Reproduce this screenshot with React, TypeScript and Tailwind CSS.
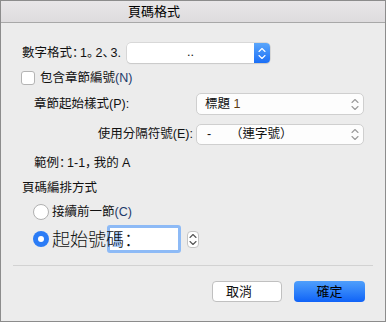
import React from "react";

const Chev = ({ color = "#8a8a8a" }: { color?: string }) => (
  <svg width="8" height="13" viewBox="0 0 8 13" fill="none">
    <path d="M1 4.5 L4 1.5 L7 4.5" stroke={color} strokeWidth="1.1" strokeLinecap="round" strokeLinejoin="round" />
    <path d="M1 8.5 L4 11.5 L7 8.5" stroke={color} strokeWidth="1.1" strokeLinecap="round" strokeLinejoin="round" />
  </svg>
);

export default function App() {
  return (
    <div className="w-[386px] h-[322px] border border-[#8c8c8c] bg-[#ececec] flex flex-col font-['Liberation_Sans','Noto_Sans_CJK_TC',sans-serif] text-[12.5px] text-[#111] leading-none overflow-hidden">
      {/* title bar */}
      <div className="h-[22px] shrink-0 border-b border-[#a8a8a8] bg-gradient-to-b from-[#e8e6e8] to-[#dedcde] flex items-center pl-[127px]">
        <span className="text-[13px] text-black">頁碼格式</span>
      </div>

      {/* row 1 */}
      <div className="mt-[20px] h-[20px] flex items-center pl-[21px]">
        <span className="w-[105px] shrink-0 whitespace-nowrap">
          數字格式<span className="font-['Noto_Sans_CJK_SC',sans-serif] tracking-[-4.5px]">：</span>1<span className="font-['Noto_Sans_CJK_SC',sans-serif] tracking-[-4px]">。</span>2<span className="font-['Noto_Sans_CJK_SC',sans-serif] tracking-[-4.5px]">、</span>3.
        </span>
        <div className="w-[143px] h-[20px] flex rounded-[4px] bg-white shadow-[0_0_0_0.5px_#c4c4c4,0_1px_1px_rgba(0,0,0,0.12)]">
          <div className="flex-1 flex items-center justify-center pb-[2px]">..</div>
          <div className="w-[16px] h-full rounded-r-[4px] bg-gradient-to-b from-[#5aa6fb] to-[#1a6ef6] flex items-center justify-center">
            <Chev color="#ffffff" />
          </div>
        </div>
      </div>

      {/* row 2 checkbox */}
      <div className="mt-[8px] h-[14px] flex items-center pl-[20px]">
        <div className="w-[14px] h-[14px] rounded-[3px] bg-white border border-[#b4b4b4]" />
        <span className="ml-[5px]">包含章節編號<span className="text-[#1d3a6a]">(N)</span></span>
      </div>

      {/* row 3 */}
      <div className="mt-[8px] h-[22px] flex items-center pl-[33px]">
        <span className="w-[162px] whitespace-nowrap">章節起始樣式(P):</span>
        <div className="w-[168px] h-[22px] rounded-[5px] bg-[#fdfdfd] border border-[#cfcfcf] flex items-center pl-[8px] pr-[4px]">
          <span className="flex-1">標題 <span className="text-[#5a3a10]">1</span></span>
          <Chev color="#9a9a9a" />
        </div>
      </div>

      {/* row 4 */}
      <div className="mt-[9px] h-[21px] flex items-center">
        <span className="w-[195px] pr-[3px] text-right whitespace-nowrap">使用分隔符號(E):</span>
        <div className="w-[168px] h-[21px] rounded-[5px] bg-[#fdfdfd] border border-[#cfcfcf] flex items-center pl-[10px] pr-[4px]">
          <span className="w-[23px]">-</span>
          <span className="flex-1">（連字號）</span>
          <Chev color="#9a9a9a" />
        </div>
      </div>

      {/* row 5 */}
      <div className="mt-[11px] h-[14px] flex items-center pl-[33px]">
        <span className="whitespace-nowrap">
          範例<span className="font-['Noto_Sans_CJK_SC',sans-serif] tracking-[-4.5px]">：</span>1-1<span className="font-['Noto_Sans_CJK_SC',sans-serif] tracking-[-4px]">，</span>我的 A
        </span>
      </div>

      {/* row 6 */}
      <div className="mt-[11px] h-[14px] flex items-center pl-[21px]">
        <span>頁碼編排方式</span>
      </div>

      {/* row 7 radio */}
      <div className="mt-[9px] h-[16px] flex items-center pl-[32px]">
        <div className="w-[16px] h-[16px] rounded-full bg-white border border-[#b0b0b0]" />
        <span className="ml-[3px]">接續前一節<span className="text-[#1d3a6a]">(C)</span></span>
      </div>

      {/* row 8 */}
      <div className="mt-[5px] h-[28px] flex items-center pl-[32px]">
        <div className="w-[16px] h-[16px] rounded-full bg-[#2b7cf6] flex items-center justify-center">
          <div className="w-[6px] h-[6px] rounded-full bg-white" />
        </div>
        <div className="relative ml-[3px] h-[28px] flex items-center">
          <div className="w-[55px] shrink-0" />
          <div className="w-[74px] h-[28px] shrink-0 rounded-[3px] border-[3px] border-[#8dbaf6] bg-white flex items-center pl-[4px]">
            <span className="w-[7px] h-[15px] bg-[#a9cbf7]" />
          </div>
          <div className="ml-[6px] w-[12px] h-[17px] rounded-[4px] bg-white border border-[#c4c4c4] flex items-center justify-center">
            <Chev color="#555555" />
          </div>
          <span className="absolute left-0 top-[4px] text-[18px] font-['Noto_Sans_CJK_TC',sans-serif] font-light text-[#111] whitespace-nowrap">
            起始號碼<span className="font-['Noto_Sans_CJK_SC',sans-serif]">：</span>
          </span>
        </div>
      </div>

      {/* separator */}
      <div className="mt-[12px] mx-[12px] h-px bg-[#d2d2d2]" />

      {/* buttons */}
      <div className="mt-[15px] flex justify-end pr-[20px] gap-[12px]">
        <div className="w-[70px] h-[21px] rounded-[4px] bg-white border border-[#c0c0c0] flex items-center pl-[13px] text-[13px]">
          取消
        </div>
        <div className="w-[71px] h-[21px] rounded-[4px] bg-gradient-to-b from-[#4f9ffb] to-[#0f62f7] flex items-center justify-center text-black text-[13px]">
          確定
        </div>
      </div>
    </div>
  );
}
